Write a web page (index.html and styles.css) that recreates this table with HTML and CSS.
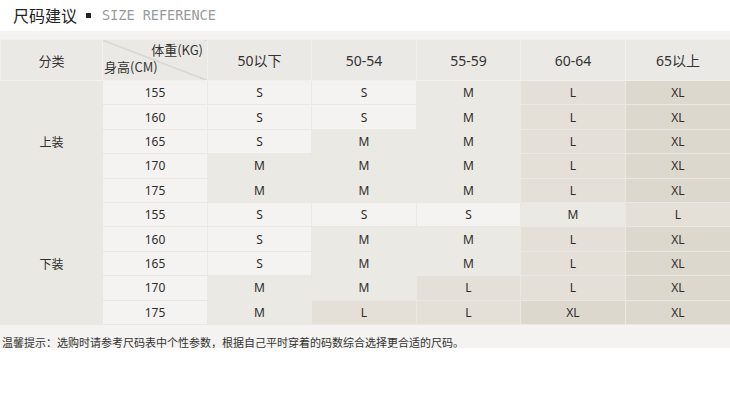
FILE: index.html
```html
<!DOCTYPE html>
<html>
<head>
<meta charset="utf-8">
<link rel="stylesheet" href="styles.css">
</head>
<body>
<div class="title">
  <span class="title-cn">尺码建议</span>
  <span class="bullet"></span>
  <span class="title-en">SIZE REFERENCE</span>
</div>
<div class="band">
  <table class="size-table">
    <colgroup>
      <col class="c1"><col class="c2"><col class="c3"><col class="c4"><col class="c5"><col class="c6"><col class="c7">
    </colgroup>
    <thead>
      <tr class="head">
        <th>分类</th>
        <th class="diag"><div class="diag-in"><span class="w">体重(KG)</span><span class="h">身高(CM)</span></div></th>
        <th>50以下</th>
        <th>50-54</th>
        <th>55-59</th>
        <th>60-64</th>
        <th>65以上</th>
      </tr>
    </thead>
    <tbody>
      <tr><td class="cat" rowspan="5">上装</td><td class="ht">155</td><td class="s">S</td><td class="s">S</td><td class="m">M</td><td class="l">L</td><td class="xl">XL</td></tr>
      <tr><td class="ht">160</td><td class="s">S</td><td class="s">S</td><td class="m">M</td><td class="l">L</td><td class="xl">XL</td></tr>
      <tr><td class="ht">165</td><td class="s">S</td><td class="m">M</td><td class="m">M</td><td class="l">L</td><td class="xl">XL</td></tr>
      <tr><td class="ht">170</td><td class="m">M</td><td class="m">M</td><td class="m">M</td><td class="l">L</td><td class="xl">XL</td></tr>
      <tr><td class="ht">175</td><td class="m">M</td><td class="m">M</td><td class="m">M</td><td class="l">L</td><td class="xl">XL</td></tr>
      <tr><td class="cat" rowspan="5">下装</td><td class="ht">155</td><td class="s">S</td><td class="s">S</td><td class="s">S</td><td class="m">M</td><td class="l">L</td></tr>
      <tr><td class="ht">160</td><td class="s">S</td><td class="m">M</td><td class="m">M</td><td class="l">L</td><td class="xl">XL</td></tr>
      <tr><td class="ht">165</td><td class="s">S</td><td class="m">M</td><td class="m">M</td><td class="l">L</td><td class="xl">XL</td></tr>
      <tr><td class="ht">170</td><td class="m">M</td><td class="m">M</td><td class="l">L</td><td class="l">L</td><td class="xl">XL</td></tr>
      <tr><td class="ht">175</td><td class="m">M</td><td class="l">L</td><td class="l">L</td><td class="xl">XL</td><td class="xl">XL</td></tr>
    </tbody>
  </table>
  <p class="tip">温馨提示：选购时请参考尺码表中个性参数，根据自己平时穿着的码数综合选择更合适的尺码。</p>
</div>
</body>
</html>
```
FILE: styles.css
```css
html, body {
  margin: 0;
  padding: 0;
  background: #ffffff;
}
body {
  width: 730px;
  font-family: "Noto Sans", "Noto Sans CJK SC", sans-serif;
  color: #333;
}
.title {
  height: 31px;
  display: flex;
  align-items: center;
  padding-left: 13px;
  box-sizing: border-box;
  padding-bottom: 1px;
}
.title-cn {
  font-family: "Noto Sans CJK SC", sans-serif;
  font-size: 16px;
  color: #222;
  line-height: 20px;
}
.bullet {
  width: 5px;
  height: 5px;
  background: #222;
  margin-left: 9px;
  margin-right: 11px;
}
.title-en {
  font-family: "DejaVu Sans Mono", "Liberation Mono", monospace;
  font-size: 13.5px;
  color: #9a9a9a;
}
.band {
  background: #f4f3f1;
  padding-top: 8px;
  height: 309px;
}
.size-table {
  width: 730px;
  table-layout: fixed;
  border-collapse: collapse;
  font-size: 12px;
}
.c1 { width: 102px; }
.c2 { width: 105px; }
.c3 { width: 104px; }
.c4 { width: 105px; }
.c5 { width: 104px; }
.c6 { width: 105px; }
.c7 { width: 105px; }
.size-table th, .size-table td {
  border: 1px solid #e9e8e4;
  padding: 0;
  text-align: center;
  vertical-align: middle;
}
.size-table th {
  background: #ebe9e5;
  font-weight: normal;
  font-size: 14px;
  color: #333;
  height: 40px;
  border-color: #f1f0ed;
}
.size-table th:first-child {
  font-size: 13px;
  font-family: "Noto Sans CJK SC", sans-serif;
}
.diag {
  background: #ebe9e5 linear-gradient(to top right, transparent calc(50% - 0.6px), #b9b7b3 50%, transparent calc(50% + 0.6px)) !important;
}
.diag-in {
  display: flex;
  flex-direction: column;
  height: 40px;
  font-size: 13px;
  font-family: "Noto Sans CJK SC", sans-serif;
  line-height: 16px;
  padding: 2px 4px 0 1px;
  box-sizing: border-box;
}
.diag-in .w { align-self: flex-end; }
.diag-in .h { align-self: flex-start; margin-top: 1px; }
.size-table td {
  height: 23.4px;
  color: #2d2d2d;
}
.cat {
  background: #eae8e3;
  font-family: "Noto Sans CJK SC", sans-serif;
  font-size: 12px;
}
.ht { background: #f4f3f1; }
.s { background: #f4f3f1; }
.m { background: #ebe9e4; }
.l { background: #e4e0d8; }
.xl { background: #ddd8cd; }
.tip {
  margin: 0;
  padding: 9px 0 0 2px;
  font-family: "Noto Sans CJK SC", sans-serif;
  font-size: 11px;
  line-height: 16px;
  color: #333;
}
```
